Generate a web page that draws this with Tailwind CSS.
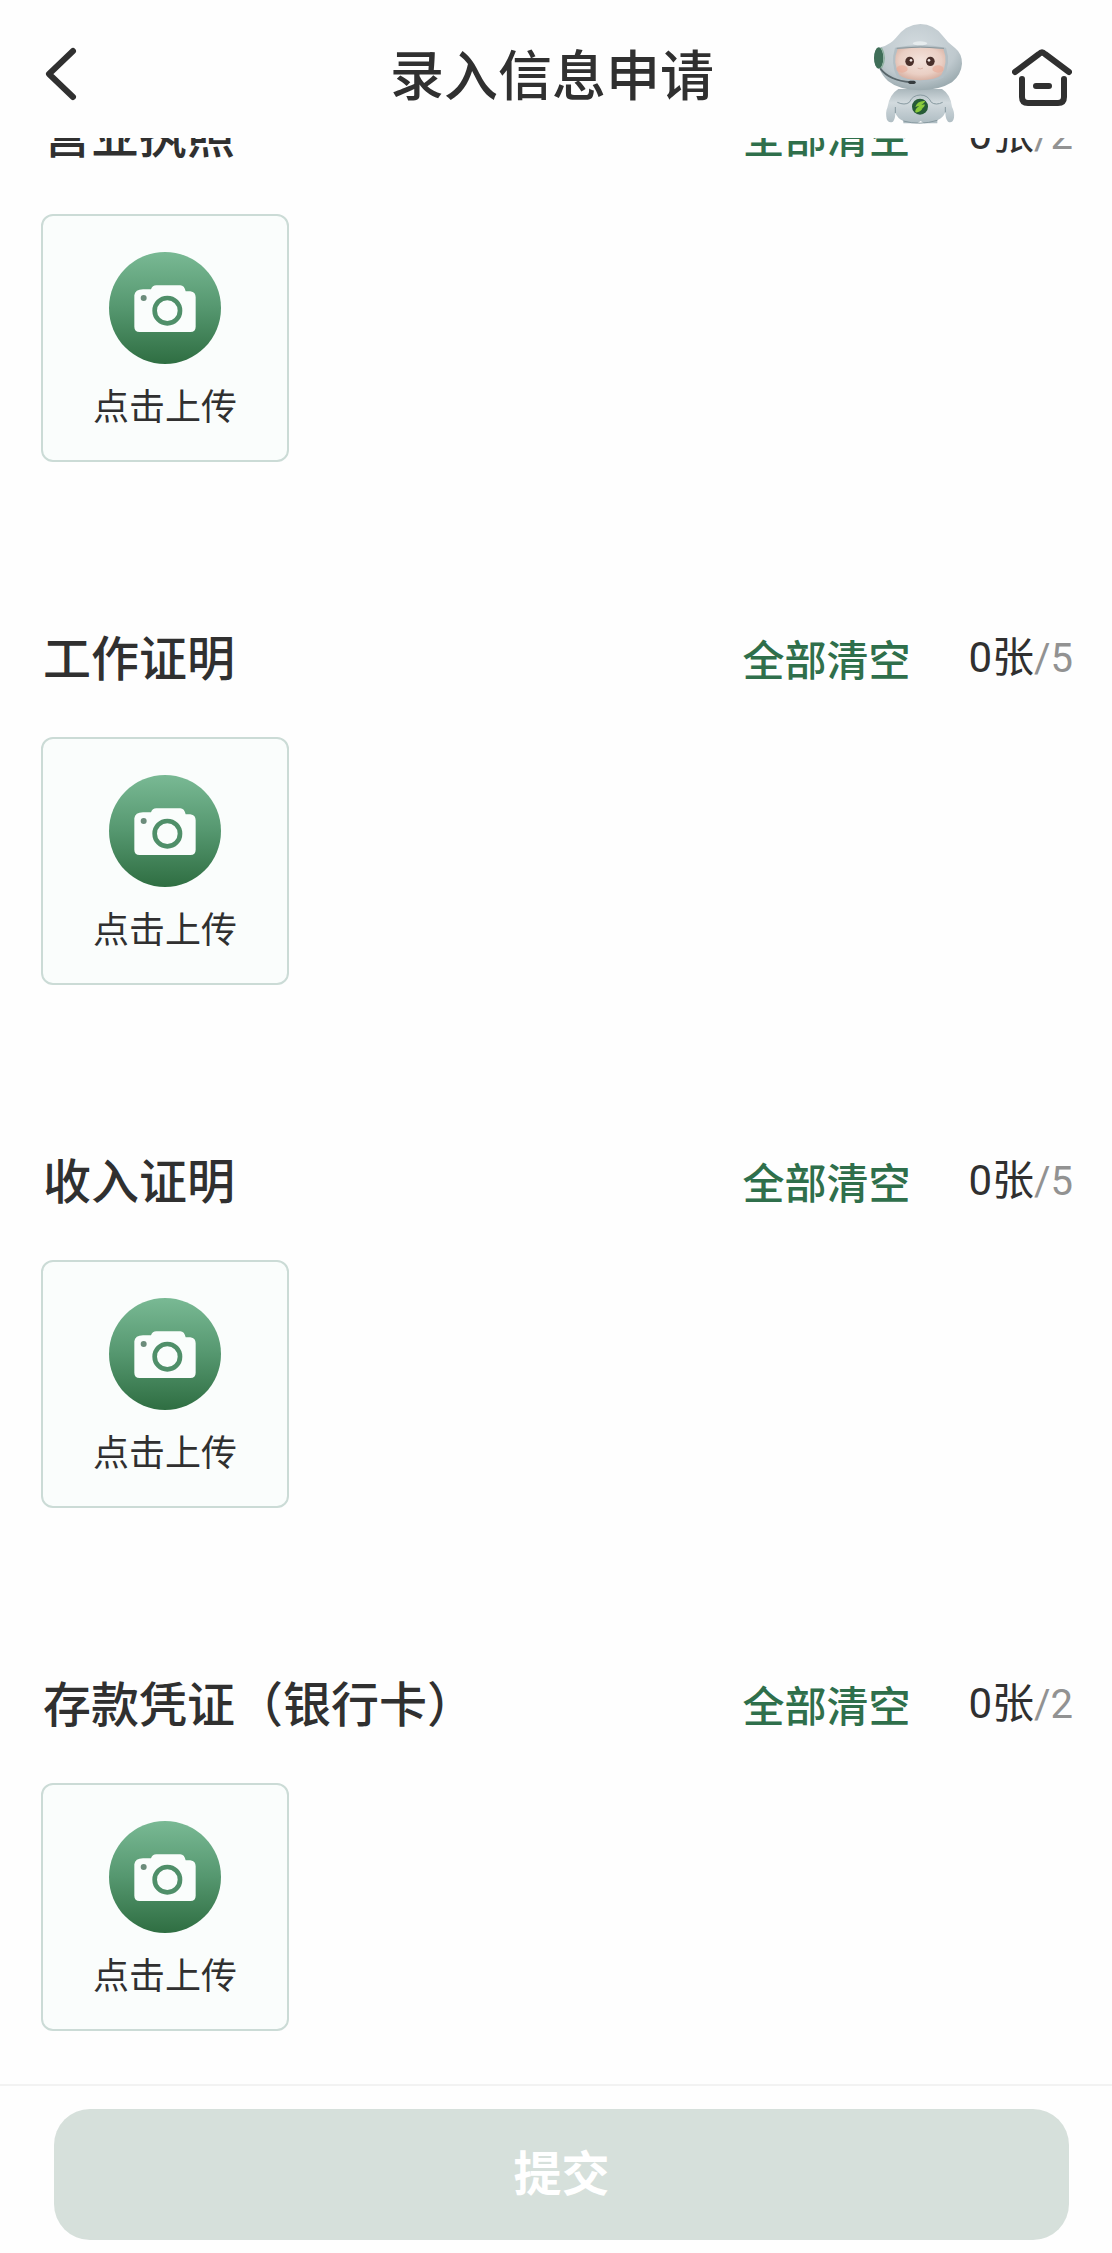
<!DOCTYPE html>
<html lang="zh-CN">
<head>
<meta charset="utf-8">
<meta name="viewport" content="width=device-width, initial-scale=1">
<title>录入信息申请</title>
<script src="https://cdn.jsdelivr.net/npm/@tailwindcss/browser@4"></script>
</head>
<body class="flex min-h-screen flex-col bg-[#fefefe] font-['Roboto','Noto_Sans_CJK_SC',sans-serif] text-[#303030]">

<svg class="absolute size-0" aria-hidden="true">
  <defs>
    <linearGradient id="disc" x1="0" y1="0" x2="0" y2="1">
      <stop offset="0" stop-color="#79b994"/>
      <stop offset="0.5" stop-color="#55976f"/>
      <stop offset="1" stop-color="#2f6e42"/>
    </linearGradient>
  </defs>
  <symbol id="camera" viewBox="0 0 336 336">
    <circle cx="168" cy="168" r="168" fill="url(#disc)"/>
    <path fill="#fafdfc" d="M76 130Q78 112 102 112H126Q130 100 142 100H214Q226 100 230 118H244Q260 120 260 136V224Q260 240 244 240H92Q76 240 76 224Z"/>
    <circle cx="104" cy="138" r="9" fill="#6c8c7b"/>
    <circle cx="175" cy="176" r="38" fill="none" stroke="#4f8f69" stroke-width="14"/>
  </symbol>
</svg>

<header class="sticky top-0 z-10 grid h-[138px] grid-cols-[1fr_auto_1fr] items-center bg-[#fefefe] pt-3 pr-10 pl-8">
  <button type="button" aria-label="返回" class="justify-self-start">
    <svg class="h-16 w-14" viewBox="0 0 56 64" fill="none" stroke="#303030" stroke-width="6" stroke-linecap="round" stroke-linejoin="round"><path d="M41 8 17 31 41 54"/></svg>
  </button>
  <h1 class="pt-1.5 text-[54px] leading-none font-medium">录入信息申请</h1>
  <div class="flex items-center gap-8 justify-self-end">
    <button type="button" aria-label="智能客服">
      <svg class="size-[120px]" viewBox="0 0 360 360">
        <defs>
          <radialGradient id="helmet" cx="0.48" cy="0.35" r="0.65">
            <stop offset="0" stop-color="#d3dbdf"/>
            <stop offset="0.7" stop-color="#bfc9ce"/>
            <stop offset="1" stop-color="#9dacb1"/>
          </radialGradient>
          <radialGradient id="face" cx="0.5" cy="0.4" r="0.6">
            <stop offset="0" stop-color="#f3e3dc"/>
            <stop offset="0.7" stop-color="#eacfc4"/>
            <stop offset="1" stop-color="#d9b3a5"/>
          </radialGradient>
          <linearGradient id="torso" x1="0" y1="0" x2="0" y2="1">
            <stop offset="0" stop-color="#aab7bc"/>
            <stop offset="0.4" stop-color="#d2dade"/>
            <stop offset="1" stop-color="#aebcc2"/>
          </linearGradient>
        </defs>
        <path fill="url(#torso)" d="M115 222Q88 238 82 278Q76 290 80 312Q86 326 99 320Q106 312 106 294Q112 310 130 318V325H172L182 318L192 325H232V316Q250 308 256 292Q256 312 264 320Q278 326 282 308Q284 290 276 276Q272 238 246 222Z"/>
        <path fill="none" stroke="#8799a0" stroke-width="3" d="M112 262Q134 272 148 262Q158 240 181 240Q204 240 214 262Q228 272 248 262M106 294V276M256 292V276M130 318Q180 332 232 316"/>
        <path fill="url(#helmet)" d="M181 27Q222 28 248 62Q262 82 286 100Q306 116 306 146Q304 178 276 202Q238 226 178 226Q116 224 84 198Q66 182 58 160Q42 150 42 126Q44 98 64 96Q92 88 108 68Q138 28 181 27Z"/>
        <path fill="#b3bfc5" d="M105 98Q182 82 258 98Q274 146 250 188Q182 214 112 188Q90 146 105 98Z"/>
        <path fill="url(#face)" d="M113 102Q182 94 250 102Q266 142 244 180Q228 195 181 196Q134 195 118 180Q96 142 113 102Z"/>
        <path fill="none" stroke="#8b9599" stroke-width="3" d="M110 100Q182 92 252 100"/>
        <ellipse cx="180" cy="85" rx="22" ry="6" fill="#e6ecee"/>
        <ellipse cx="126" cy="162" rx="17" ry="11" fill="#e9a995" fill-opacity="0.6"/>
        <ellipse cx="234" cy="162" rx="17" ry="11" fill="#e9a995" fill-opacity="0.6"/>
        <ellipse cx="149" cy="139" rx="13" ry="14" fill="#4a302b"/>
        <ellipse cx="211" cy="139" rx="13" ry="14" fill="#4a302b"/>
        <circle cx="153" cy="136" r="4" fill="#f3e9e6"/>
        <circle cx="207" cy="136" r="4" fill="#f3e9e6"/>
        <path fill="none" stroke="#dbb5a8" stroke-width="3" stroke-linecap="round" d="M174 160Q181 164 188 160"/>
        <ellipse cx="56" cy="129" rx="14" ry="32" fill="#3f6e58"/>
        <path fill="none" stroke="#8eb2a0" stroke-width="4" d="M64 98Q82 128 64 160"/>
        <path fill="none" stroke="#59666b" stroke-width="6" stroke-linecap="round" d="M62 162Q88 196 152 202"/>
        <path stroke="#353b3e" stroke-width="10" stroke-linecap="round" d="M150 202H162"/>
        <circle cx="180" cy="275" r="24" fill="#275b37"/>
        <path fill="#8acb3c" d="M196 258Q172 256 166 276L178 272Q164 282 166 292Q180 294 188 280L180 282Q196 278 194 268L184 270Q192 266 196 258Z"/>
      </svg>
    </button>
    <a href="#" aria-label="首页">
      <svg class="h-16 w-[60px]" viewBox="0 0 60 64" fill="none" stroke="#303030" stroke-width="6" stroke-linecap="round" stroke-linejoin="round"><path d="M3 29 27 11Q30 8 33 11L57 29M10 36V54Q10 60 16 60H46Q52 60 52 54V36M24 43H37"/></svg>
    </a>
  </div>
</header>

<main class="-mt-[43px] flex-1">
  <section class="pr-[39px] pb-[156px] pl-[41px]">
    <div class="mb-[39px] flex h-20 items-center">
      <h2 class="flex-1 pt-1 pl-0.5 text-[48px] leading-none font-medium">营业执照</h2>
      <button type="button" class="mr-[58px] pt-2 text-[42px] leading-none font-medium text-[#2f6f4b]">全部清空</button>
      <p class="text-[42px] leading-none">0张<span class="text-[40px] text-[#929292]">/2</span></p>
    </div>
    <button type="button" class="flex size-[248px] flex-col items-center rounded-xl border-2 border-[#cbdbd6] bg-[#fafdfc] pt-9">
      <svg class="size-28" aria-hidden="true"><use href="#camera"/></svg>
      <span class="mt-[26px] text-[36px] leading-none">点击上传</span>
    </button>
  </section>

  <section class="pr-[39px] pb-[156px] pl-[41px]">
    <div class="mb-[39px] flex h-20 items-center">
      <h2 class="flex-1 pt-1 pl-0.5 text-[48px] leading-none font-medium">工作证明</h2>
      <button type="button" class="mr-[58px] pt-2 text-[42px] leading-none font-medium text-[#2f6f4b]">全部清空</button>
      <p class="text-[42px] leading-none">0张<span class="text-[40px] text-[#929292]">/5</span></p>
    </div>
    <button type="button" class="flex size-[248px] flex-col items-center rounded-xl border-2 border-[#cbdbd6] bg-[#fafdfc] pt-9">
      <svg class="size-28" aria-hidden="true"><use href="#camera"/></svg>
      <span class="mt-[26px] text-[36px] leading-none">点击上传</span>
    </button>
  </section>

  <section class="pr-[39px] pb-[156px] pl-[41px]">
    <div class="mb-[39px] flex h-20 items-center">
      <h2 class="flex-1 pt-1 pl-0.5 text-[48px] leading-none font-medium">收入证明</h2>
      <button type="button" class="mr-[58px] pt-2 text-[42px] leading-none font-medium text-[#2f6f4b]">全部清空</button>
      <p class="text-[42px] leading-none">0张<span class="text-[40px] text-[#929292]">/5</span></p>
    </div>
    <button type="button" class="flex size-[248px] flex-col items-center rounded-xl border-2 border-[#cbdbd6] bg-[#fafdfc] pt-9">
      <svg class="size-28" aria-hidden="true"><use href="#camera"/></svg>
      <span class="mt-[26px] text-[36px] leading-none">点击上传</span>
    </button>
  </section>

  <section class="pr-[39px] pb-[53px] pl-[41px]">
    <div class="mb-[39px] flex h-20 items-center">
      <h2 class="flex-1 pt-1 pl-0.5 text-[48px] leading-none font-medium">存款凭证（银行卡）</h2>
      <button type="button" class="mr-[58px] pt-2 text-[42px] leading-none font-medium text-[#2f6f4b]">全部清空</button>
      <p class="text-[42px] leading-none">0张<span class="text-[40px] text-[#929292]">/2</span></p>
    </div>
    <button type="button" class="flex size-[248px] flex-col items-center rounded-xl border-2 border-[#cbdbd6] bg-[#fafdfc] pt-9">
      <svg class="size-28" aria-hidden="true"><use href="#camera"/></svg>
      <span class="mt-[26px] text-[36px] leading-none">点击上传</span>
    </button>
  </section>
</main>

<footer class="sticky bottom-0 border-t-2 border-[#f2f2f2] bg-[#fefefe] pt-[23px] pr-[43px] pb-[13px] pl-[54px]">
  <button type="submit" disabled class="h-[131px] w-full rounded-[36px] bg-[#d6e0db] text-[48px] leading-none font-bold text-white">提交</button>
</footer>
</body>
</html>
